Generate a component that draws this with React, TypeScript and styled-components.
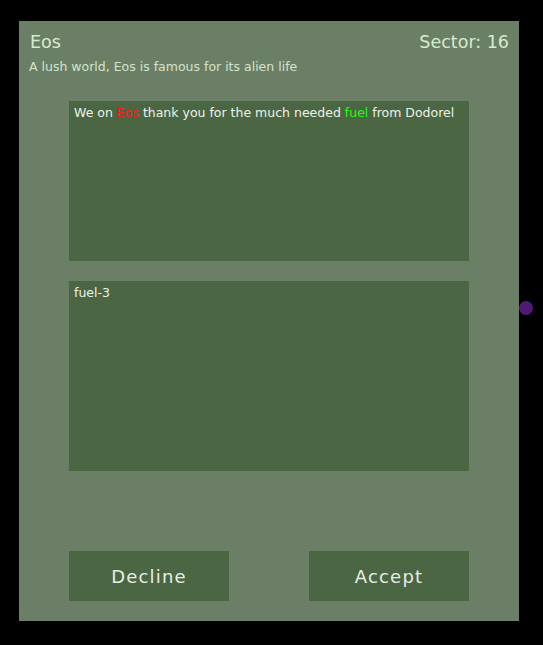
import React from "react";
import styled, { createGlobalStyle } from "styled-components";

const Global = createGlobalStyle`
  html, body { margin: 0; padding: 0; background: #000; }
  body { width: 543px; height: 645px; overflow: hidden; font-family: "DejaVu Sans", Verdana, sans-serif; }
`;

const Screen = styled.div`
  position: relative;
  width: 543px;
  height: 645px;
  padding: 21px 0 0 19px;
  box-sizing: border-box;
`;

const Panel = styled.div`
  width: 500px;
  height: 600px;
  background: #6b7f66;
  box-sizing: border-box;
  padding: 10px 10px 20px 11px;
  display: flex;
  flex-direction: column;
`;

const Header = styled.div`
  display: flex;
  justify-content: space-between;
  align-items: baseline;
  color: #d6ebcd;
  font-size: 17.5px;
  line-height: 22px;
`;

const Subtitle = styled.div`
  color: #d3e3cc;
  font-size: 12.5px;
  line-height: 16px;
  margin-top: 6px;
  margin-left: -1px;
`;

const Box = styled.div<{ $h: number; $top: number }>`
  margin: ${(p) => p.$top}px 0 0 39px;
  width: 400px;
  height: ${(p) => p.$h}px;
  background: #4b6642;
  box-sizing: border-box;
  padding: 4px 5px;
  color: #eef2ea;
  font-size: 12.5px;
  line-height: 16px;
`;

const Hl = styled.span<{ $c: string }>`
  color: ${(p) => p.$c};
`;

const Buttons = styled.div`
  margin: auto 0 0 39px;
  width: 400px;
  display: flex;
  justify-content: space-between;
`;

const Button = styled.button`
  width: 160px;
  height: 50px;
  border: none;
  background: #4b6642;
  color: #e8eee4;
  font-family: "DejaVu Sans", Verdana, sans-serif;
  font-size: 18px;
  line-height: 20px;
  letter-spacing: 1.2px;
  padding: 2px 0 0;
  cursor: pointer;
`;

const Dot = styled.div`
  position: absolute;
  left: 519px;
  top: 301px;
  width: 14px;
  height: 14px;
  border-radius: 50%;
  background: #4e1a72;
`;

export default function App() {
  return (
    <Screen>
      <Global />
      <Panel>
        <Header>
          <span>Eos</span>
          <span>Sector: 16</span>
        </Header>
        <Subtitle>A lush world, Eos is famous for its alien life</Subtitle>
        <Box $h={160} $top={26}>
          We on <Hl $c="#ff1a1a">Eos</Hl> thank you for the much needed{" "}
          <Hl $c="#1aff1a">fuel</Hl> from Dodorel
        </Box>
        <Box $h={190} $top={20}>fuel-3</Box>
        <Buttons>
          <Button>Decline</Button>
          <Button>Accept</Button>
        </Buttons>
      </Panel>
      <Dot />
    </Screen>
  );
}
